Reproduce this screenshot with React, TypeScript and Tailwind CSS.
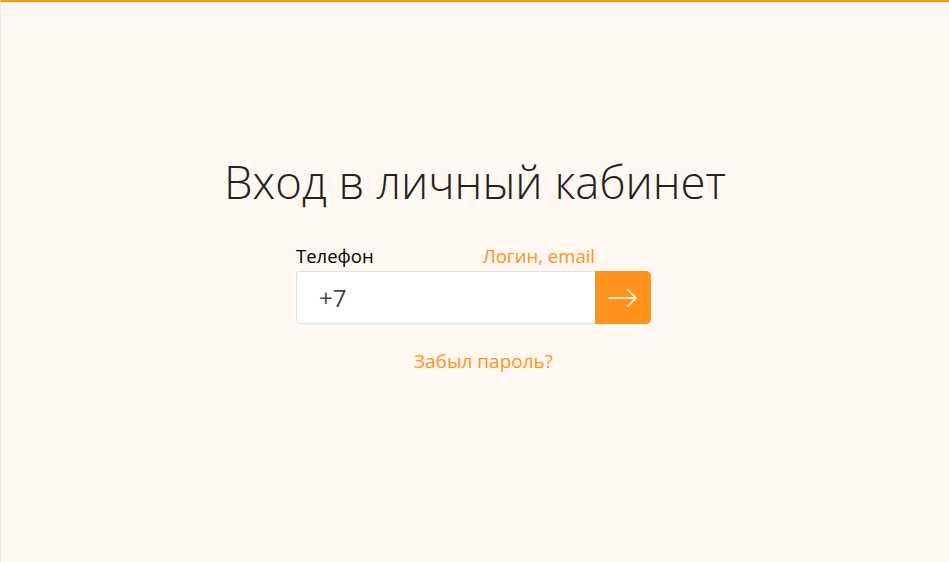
export default function App() {
  return (
    <div
      className="flex h-[562px] w-full flex-col items-center border-t-2 border-l border-t-[#ff931e] border-l-[#f3ece4] bg-[#fff7f0] pt-[149px]"
      style={{ fontFamily: '"Open Sans", "Noto Sans", sans-serif' }}
    >
      <h1 className="text-[45.5px] leading-[60px] font-light text-[#222]">Вход в личный кабинет</h1>
      <form className="mt-[34px] mr-[3px] w-[355px]" onSubmit={(e) => e.preventDefault()}>
        <div className="flex w-[299px] items-end justify-between text-[18.5px] leading-[22px]">
          <span className="text-black">Телефон</span>
          <a href="#" className="text-[#ff931e]">Логин, email</a>
        </div>
        <div className="mt-[4px] flex h-[53px]">
          <input
            className="h-full w-[299px] rounded-l-[4px] border border-r-0 border-[#e2e2e2] bg-white pl-[22px] text-[24px] text-[#444] outline-none"
            defaultValue="+7"
          />
          <button type="submit" className="flex h-full w-[56px] items-center justify-center rounded-r-[5px] bg-[#ff931e]">
            <svg width="30" height="18" viewBox="0 0 30 18" fill="none" stroke="white" strokeWidth="1.6" strokeLinecap="round" strokeLinejoin="round">
              <path d="M1 9h27M20 1l8 8-8 8" />
            </svg>
          </button>
        </div>
        <div className="mt-[23px] text-center">
          <a href="#" className="ml-[20px] text-[19px] text-[#ff931e]">Забыл пароль?</a>
        </div>
      </form>
    </div>
  );
}
